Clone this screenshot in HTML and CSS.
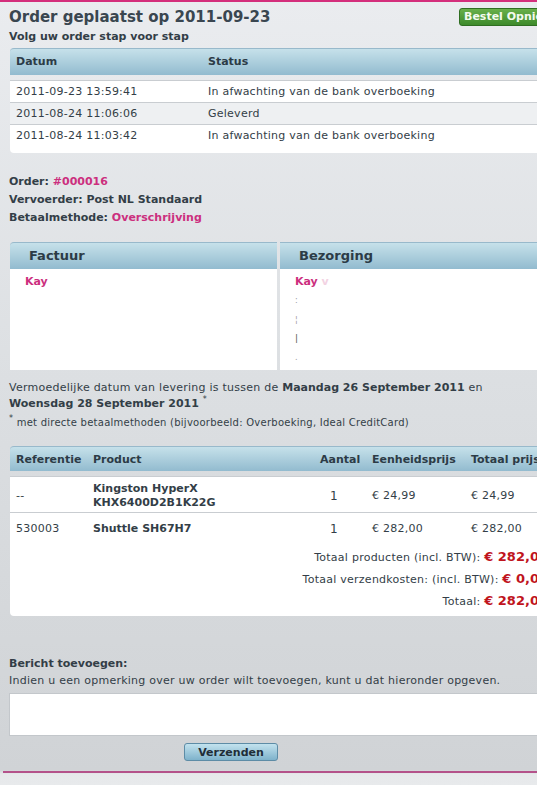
FILE: index.html
```html
<!DOCTYPE html>
<html lang="nl">
<head>
<meta charset="utf-8">
<title>Order geplaatst op 2011-09-23</title>
<link rel="stylesheet" href="styles.css">
</head>
<body>
<div class="topbar"></div>
<div class="page">
  <header class="head">
    <div class="head-text">
      <h1 class="title">Order geplaatst op 2011-09-23</h1>
      <h2 class="subtitle">Volg uw order stap voor stap</h2>
    </div>
    <a class="btn-green">Bestel Opnieuw</a>
  </header>

  <section class="panel status">
    <div class="thead status-grid">
      <span>Datum</span><span>Status</span>
    </div>
    <div class="tbody">
      <div class="srow status-grid"><span>2011-09-23 13:59:41</span><span>In afwachting van de bank overboeking</span></div>
      <div class="srow alt status-grid"><span>2011-08-24 11:06:06</span><span>Geleverd</span></div>
      <div class="srow status-grid"><span>2011-08-24 11:03:42</span><span>In afwachting van de bank overboeking</span></div>
    </div>
  </section>

  <section class="info">
    <div>Order: <span class="pink">#000016</span></div>
    <div>Vervoerder: Post NL Standaard</div>
    <div>Betaalmethode: <span class="pink">Overschrijving</span></div>
  </section>

  <section class="addresses">
    <div class="addr first">
      <div class="addr-head">Factuur</div>
      <div class="addr-body">
        <div class="name">Kay</div>
      </div>
    </div>
    <div class="addr">
      <div class="addr-head">Bezorging</div>
      <div class="addr-body">
        <div class="name">Kay <span class="faint">v</span></div>
        <div class="mark">:</div>
        <div class="mark">¦</div>
        <div class="mark dark">|</div>
        <div class="mark">.</div>
      </div>
    </div>
  </section>

  <section class="delivery">
    <p class="delivery-text">Vermoedelijke datum van levering is tussen de <b>Maandag 26 September 2011</b> en <b>Woensdag 28 September 2011</b> <sup>*</sup></p>
    <p class="footnote"><sup>*</sup> met directe betaalmethoden (bijvoorbeeld: Overboeking, Ideal CreditCard)</p>
  </section>

  <section class="panel products">
    <div class="thead prod-grid">
      <span>Referentie</span><span>Product</span><span>Aantal</span><span>Eenheidsprijs</span><span>Totaal prijs</span>
    </div>
    <div class="tbody">
      <div class="prow prod-grid">
        <span>--</span><span class="pname">Kingston HyperX<br>KHX6400D2B1K22G</span><span class="qty">1</span><span>€ 24,99</span><span>€ 24,99</span>
      </div>
      <div class="prow second prod-grid">
        <span>530003</span><span class="pname">Shuttle SH67H7</span><span class="qty">1</span><span>€ 282,00</span><span>€ 282,00</span>
      </div>
      <div class="totals">
        <div class="trow">Totaal producten (incl. BTW): <b class="price">€ 282,00</b></div>
        <div class="trow">Totaal verzendkosten: (incl. BTW): <b class="price">€ 0,00</b></div>
        <div class="trow">Totaal: <b class="price">€ 282,00</b></div>
      </div>
    </div>
  </section>

  <section class="message">
    <div class="msg-title">Bericht toevoegen:</div>
    <div class="msg-text">Indien u een opmerking over uw order wilt toevoegen, kunt u dat hieronder opgeven.</div>
    <textarea class="msg-input"></textarea>
    <button class="btn-blue" type="button">Verzenden</button>
  </section>
</div>
</body>
</html>
```

FILE: styles.css
```css
html, body {
  margin: 0;
  padding: 0;
  overflow: hidden;
}
body {
  width: 537px;
  height: 785px;
  font-family: "DejaVu Sans", Verdana, sans-serif;
  font-size: 11px;
  letter-spacing: 0.25px;
  color: #333e47;
  background: linear-gradient(#eaecef 0px, #dcdfe2 380px, #d0d3d6 770px, #e6e8ea 774px, #e8eaec 785px);
}
b, .title, .subtitle, .thead, .info, .addr-head, .name, .pname, .msg-title, .btn-green, .btn-blue {
  letter-spacing: 0;
}
.topbar {
  height: 2px;
  background: #d42f7c;
}
.page {
  width: 580px;
  margin-left: 3px;
  padding: 0 0 10px 6px;
  border-bottom: 2px solid #b4528a;
  box-sizing: border-box;
}

/* header */
.head {
  display: flex;
  align-items: flex-start;
  padding-top: 6px;
}
.head-text {
  width: 450px;
}
.title {
  margin: 0;
  font-size: 15px;
  line-height: 18px;
  font-weight: bold;
  color: #3a4650;
}
.subtitle {
  margin: 4px 0 0;
  font-size: 11px;
  line-height: 14px;
  font-weight: bold;
  color: #333e47;
}
.btn-green {
  margin-top: 0;
  height: 18px;
  line-height: 16px;
  padding: 0 4px;
  box-sizing: border-box;
  border: 1px solid #2f6e22;
  border-radius: 3px;
  background: linear-gradient(#68b04b, #3d8a2b);
  color: #f4fbef;
  font-weight: bold;
  font-size: 11px;
  white-space: nowrap;
}

/* panels */
.panel {
  margin-left: 1px;
  width: 546px;
}
.status {
  margin-top: 4px;
}
.thead {
  height: 27px;
  line-height: 26px;
  box-sizing: border-box;
  border-top: 1px solid #98b9cb;
  border-radius: 4px 0 0 0;
  background: linear-gradient(#c6e1ea, #92bbcf);
  font-weight: bold;
  color: #2c3b46;
  padding-left: 6px;
}
.tbody {
  margin-top: 5px;
  background: #fff;
  border-top: 1px solid #c9cdd1;
  border-radius: 0 0 4px 4px;
}
.status .tbody {
  padding-bottom: 6px;
}
.status-grid {
  display: grid;
  grid-template-columns: 192px 1fr;
}
.srow {
  height: 22px;
  line-height: 21px;
  box-sizing: border-box;
  padding-left: 6px;
  border-bottom: 1px solid #c9cdd1;
}
.srow:last-child {
  border-bottom: none;
}
.srow.alt {
  background: #eef0f2;
}

/* order info */
.info {
  margin-top: 20px;
  line-height: 18px;
  font-weight: bold;
  color: #333e47;
}
.pink {
  color: #cc2f7e;
}

/* addresses */
.addresses {
  margin-top: 15px;
  margin-left: 1px;
  width: 546px;
  display: grid;
  grid-template-columns: 267px 1fr;
  column-gap: 3px;
}
.addr-head {
  height: 27px;
  line-height: 26px;
  box-sizing: border-box;
  border-top: 1px solid #98b9cb;
  background: linear-gradient(#c6e1ea, #92bbcf);
  font-size: 13px;
  font-weight: bold;
  color: #2c3b46;
  padding-left: 19px;
}
.addr.first .addr-head {
  border-radius: 4px 0 0 0;
}
.addr-body {
  height: 101px;
  box-sizing: border-box;
  background: #fff;
  padding: 4px 0 0 15px;
}
.name {
  line-height: 18px;
  font-weight: bold;
  color: #cc2f7e;
}
.faint {
  color: #f3d3e3;
}
.mark {
  height: 19px;
  line-height: 19px;
  font-size: 8px;
  color: #9a9a9a;
}
.mark.dark {
  color: #555;
  font-size: 9px;
}

/* delivery */
.delivery {
  margin-top: 10px;
}
.delivery-text {
  margin: 0;
  line-height: 16px;
  width: 520px;
}
.delivery-text b {
  color: #333e47;
}
sup {
  font-size: 8px;
  line-height: 0;
  vertical-align: 5px;
}
.footnote {
  margin: 4px 0 0;
  font-size: 10px;
  line-height: 14px;
}

/* products */
.products {
  margin-top: 16px;
}
.products .thead {
  height: 25px;
  line-height: 25px;
  padding-left: 0;
}
.prod-grid {
  display: grid;
  grid-template-columns: 83px 227px 52px 99px 1fr;
}
.prod-grid > span:first-child {
  padding-left: 6px;
}
.prow {
  align-items: center;
  line-height: 14px;
  border-bottom: 1px solid #c9cdd1;
  padding: 5px 0 2px;
}
.prow.second {
  border-bottom: none;
  padding: 9px 0 10px;
}
.pname {
  font-weight: bold;
  color: #333e47;
}
.qty {
  padding-left: 10px;
  font-size: 12px;
}
.totals {
  padding: 0 8px 4px 0;
  text-align: right;
}
.trow {
  height: 22px;
  line-height: 22px;
}
.price {
  font-size: 13px;
  color: #c0141d;
}

/* message */
.message {
  margin-top: 40px;
}
.msg-title {
  font-weight: bold;
  line-height: 16px;
  color: #333e47;
}
.msg-text {
  line-height: 17px;
}
.msg-input {
  display: block;
  margin-top: 4px;
  width: 570px;
  height: 43px;
  box-sizing: border-box;
  border: 1px solid #c3c7cb;
  background: #fff;
  resize: none;
  padding: 0;
}
.btn-blue {
  display: block;
  margin: 7px 0 0 175px;
  width: 94px;
  height: 18px;
  padding: 0;
  border: 1px solid #5d8ca6;
  border-radius: 3px;
  background: linear-gradient(#c2e2ee, #7eb2cb);
  font-family: "DejaVu Sans", Verdana, sans-serif;
  font-size: 11px;
  font-weight: bold;
  color: #1f2d38;
  line-height: 15px;
}
```
